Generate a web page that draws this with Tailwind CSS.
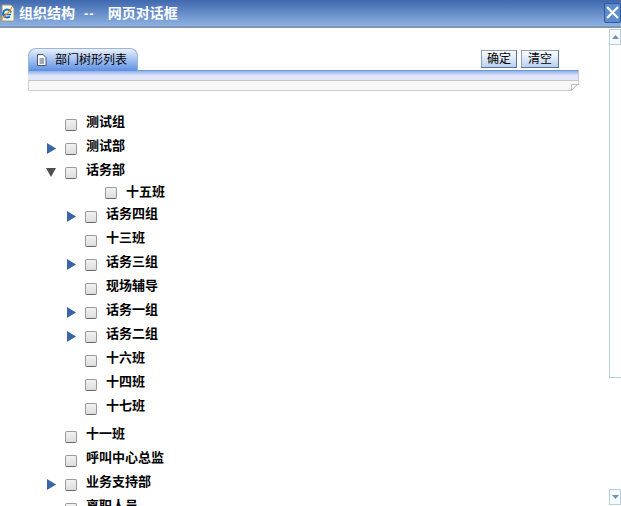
<!DOCTYPE html>
<html lang="zh-CN">
<head>
    <meta charset="UTF-8">
    <title>组织结构 -- 网页对话框</title>
    <script src="https://cdn.jsdelivr.net/npm/@tailwindcss/browser@4"></script>
</head>
<body class="w-[621px] h-[506px] overflow-hidden bg-white text-black font-['Liberation_Sans','Noto_Sans_CJK_SC',sans-serif]">
    <!-- Title bar -->
    <header class="h-[28px] flex items-center bg-gradient-to-b from-[#3f68ae] to-[#8fb2e2] border-b-2 border-b-[#7f97b5]">
        <svg class="w-[15px] h-[18px] shrink-0" viewBox="0 0 15 18">
            <path d="M2 1h9l3 3v13H2z" fill="#fbf8e8" stroke="#9a9a80"/>
            <path d="M2 10.500h9" stroke="#1c6fc4" stroke-width="1.600"/>
            <path d="M11 8.500a4 4 0 1 0-1.200 4" fill="none" stroke="#1c6fc4" stroke-width="2"/>
            <path d="M0 15C3 14 10 8 12 3" fill="none" stroke="#e09a20" stroke-width="1.300"/>
        </svg>
        <span class="ml-[4px] text-[14px] leading-none font-bold text-white whitespace-pre">组织结构</span>
        <span class="ml-[9px] text-[13px] leading-none font-bold text-white whitespace-pre tracking-[1px]">--</span>
        <span class="ml-[13px] text-[14px] leading-none font-bold text-white whitespace-pre">网页对话框</span>
        <button class="ml-auto w-[17px] h-[20px] mb-[1px] flex items-center justify-center rounded-[2px] border border-[#2f5a9e] bg-[#5d8bd0]" aria-label="关闭">
            <svg class="w-[13px] h-[13px]" viewBox="0 0 13 13"><path d="M1 1l11 11M12 1L1 12" stroke="#fff" stroke-width="2.200"/></svg>
        </button>
    </header>

    <div class="flex h-[478px]">
        <main class="flex-1 min-w-0 overflow-hidden pt-[20px] pl-[28px]">
            <!-- Tab strip -->
            <section class="w-[551px]">
                <div class="h-[22px] flex items-start">
                    <div class="w-[110px] h-[23px] flex items-center rounded-t-[8px] border border-b-0 border-[#9db4d6] bg-gradient-to-b from-[#e8f0fb] via-[#94b6ee] via-60% to-[#5a8fe0]">
                        <svg class="w-[11px] h-[12px] ml-[7px]" viewBox="0 0 11 12"><path d="M1.500 .5h5.500l3 3v8h-8.500z" fill="#fff" stroke="#44536e"/><path d="M3.500 5h4.500M3.500 7h4.500M3.500 9h4.500" stroke="#44536e"/></svg>
                        <span class="ml-[8px] text-[12px] leading-none">部门树形列表</span>
                    </div>
                    <div class="ml-auto mr-[20px] mt-[2px] flex gap-[4px]">
                        <button class="w-[36px] h-[18px] text-[12px] leading-none border border-[#8aa0bd] border-r-[#5b7391] border-b-[#5b7391] bg-gradient-to-b from-white to-[#b9d0f2]">确定</button>
                        <button class="w-[38px] h-[18px] text-[12px] leading-none border border-[#8aa0bd] border-r-[#5b7391] border-b-[#5b7391] bg-gradient-to-b from-white to-[#b9d0f2]">清空</button>
                    </div>
                </div>
                <div class="h-[10px] border-t border-[#6d97d6] border-r border-r-[#c8c8c8] bg-gradient-to-b from-[#8fb0e8] via-[#dfe5fb] to-[#e6e8fb]"></div>
                <div class="relative h-[11px] border border-t-[#c8c8c8] border-[#d0d0d0] bg-[#f8f8f8]">
                    <svg class="absolute right-[-1px] bottom-[-1px] w-[8px] h-[8px]" viewBox="0 0 8 8"><path d="M8 0v8H0z" fill="#fff"/><path d="M0 8V1.500h8" fill="#f8f8f8"/><path d="M.5 8V1.500H8M.5 7.500L7.500 .5" fill="none" stroke="#bdbdbd"/></svg>
                </div>
            </section>

            <!-- Department tree -->
            <ul id="tree" class="mt-[19px] text-[13px] font-bold leading-none">
                <li class="h-6 flex items-center -ml-[28px] pl-[65px]"><span class="w-[12px] h-[12px] mt-[6px] rounded-[2px] border border-[#9a9a9a] border-b-[#666] bg-gradient-to-b from-[#f2f2f2] to-[#dcdcdc]"></span><span class="ml-[9px] -mt-[2px]">测试组</span></li>
                <li class="h-6 flex items-center -ml-[28px] pl-[47px]"><svg class="w-[9px] h-[11px] mt-[5px]" viewBox="0 0 9 11"><path d="M0 0l9 5.500-9 5.500z" fill="#3a65a8"/></svg><span class="ml-[9px] w-[12px] h-[12px] mt-[6px] rounded-[2px] border border-[#9a9a9a] border-b-[#666] bg-gradient-to-b from-[#f2f2f2] to-[#dcdcdc]"></span><span class="ml-[9px] -mt-[2px]">测试部</span></li>
                <li class="h-6 flex items-center -ml-[28px] pl-[46px]"><svg class="w-[10px] h-[9px] mt-[5px]" viewBox="0 0 10 9"><path d="M0 0h10l-5 9z" fill="#505050"/></svg><span class="ml-[9px] w-[12px] h-[12px] mt-[6px] rounded-[2px] border border-[#9a9a9a] border-b-[#666] bg-gradient-to-b from-[#f2f2f2] to-[#dcdcdc]"></span><span class="ml-[9px] -mt-[2px]">话务部</span></li>
                <li class="h-[22px] flex items-center -ml-[28px] pl-[105px]"><span class="w-[12px] h-[12px] rounded-[2px] border border-[#9a9a9a] border-b-[#666] bg-gradient-to-b from-[#f2f2f2] to-[#dcdcdc]"></span><span class="ml-[9px] -mt-[4px]">十五班</span></li>
                <li class="h-[22px] flex items-center -ml-[28px] pl-[67px]"><svg class="w-[9px] h-[11px] mt-[3px]" viewBox="0 0 9 11"><path d="M0 0l9 5.500-9 5.500z" fill="#3a65a8"/></svg><span class="ml-[9px] w-[12px] h-[12px] mt-[4px] rounded-[2px] border border-[#9a9a9a] border-b-[#666] bg-gradient-to-b from-[#f2f2f2] to-[#dcdcdc]"></span><span class="ml-[9px] -mt-[4px]">话务四组</span></li>
                <li class="h-6 flex items-center -ml-[28px] pl-[85px]"><span class="w-[12px] h-[12px] mt-[6px] rounded-[2px] border border-[#9a9a9a] border-b-[#666] bg-gradient-to-b from-[#f2f2f2] to-[#dcdcdc]"></span><span class="ml-[9px] -mt-[2px]">十三班</span></li>
                <li class="h-6 flex items-center -ml-[28px] pl-[67px]"><svg class="w-[9px] h-[11px] mt-[5px]" viewBox="0 0 9 11"><path d="M0 0l9 5.500-9 5.500z" fill="#3a65a8"/></svg><span class="ml-[9px] w-[12px] h-[12px] mt-[6px] rounded-[2px] border border-[#9a9a9a] border-b-[#666] bg-gradient-to-b from-[#f2f2f2] to-[#dcdcdc]"></span><span class="ml-[9px] -mt-[2px]">话务三组</span></li>
                <li class="h-6 flex items-center -ml-[28px] pl-[85px]"><span class="w-[12px] h-[12px] mt-[6px] rounded-[2px] border border-[#9a9a9a] border-b-[#666] bg-gradient-to-b from-[#f2f2f2] to-[#dcdcdc]"></span><span class="ml-[9px] -mt-[2px]">现场辅导</span></li>
                <li class="h-6 flex items-center -ml-[28px] pl-[67px]"><svg class="w-[9px] h-[11px] mt-[5px]" viewBox="0 0 9 11"><path d="M0 0l9 5.500-9 5.500z" fill="#3a65a8"/></svg><span class="ml-[9px] w-[12px] h-[12px] mt-[6px] rounded-[2px] border border-[#9a9a9a] border-b-[#666] bg-gradient-to-b from-[#f2f2f2] to-[#dcdcdc]"></span><span class="ml-[9px] -mt-[2px]">话务一组</span></li>
                <li class="h-6 flex items-center -ml-[28px] pl-[67px]"><svg class="w-[9px] h-[11px] mt-[5px]" viewBox="0 0 9 11"><path d="M0 0l9 5.500-9 5.500z" fill="#3a65a8"/></svg><span class="ml-[9px] w-[12px] h-[12px] mt-[6px] rounded-[2px] border border-[#9a9a9a] border-b-[#666] bg-gradient-to-b from-[#f2f2f2] to-[#dcdcdc]"></span><span class="ml-[9px] -mt-[2px]">话务二组</span></li>
                <li class="h-6 flex items-center -ml-[28px] pl-[85px]"><span class="w-[12px] h-[12px] mt-[6px] rounded-[2px] border border-[#9a9a9a] border-b-[#666] bg-gradient-to-b from-[#f2f2f2] to-[#dcdcdc]"></span><span class="ml-[9px] -mt-[2px]">十六班</span></li>
                <li class="h-6 flex items-center -ml-[28px] pl-[85px]"><span class="w-[12px] h-[12px] mt-[6px] rounded-[2px] border border-[#9a9a9a] border-b-[#666] bg-gradient-to-b from-[#f2f2f2] to-[#dcdcdc]"></span><span class="ml-[9px] -mt-[2px]">十四班</span></li>
                <li class="h-6 flex items-center -ml-[28px] pl-[85px]"><span class="w-[12px] h-[12px] mt-[6px] rounded-[2px] border border-[#9a9a9a] border-b-[#666] bg-gradient-to-b from-[#f2f2f2] to-[#dcdcdc]"></span><span class="ml-[9px] -mt-[2px]">十七班</span></li>
                <li class="h-6 mt-[4px] flex items-center -ml-[28px] pl-[65px]"><span class="w-[12px] h-[12px] mt-[6px] rounded-[2px] border border-[#9a9a9a] border-b-[#666] bg-gradient-to-b from-[#f2f2f2] to-[#dcdcdc]"></span><span class="ml-[9px] -mt-[2px]">十一班</span></li>
                <li class="h-6 flex items-center -ml-[28px] pl-[65px]"><span class="w-[12px] h-[12px] mt-[6px] rounded-[2px] border border-[#9a9a9a] border-b-[#666] bg-gradient-to-b from-[#f2f2f2] to-[#dcdcdc]"></span><span class="ml-[9px] -mt-[2px]">呼叫中心总监</span></li>
                <li class="h-6 flex items-center -ml-[28px] pl-[47px]"><svg class="w-[9px] h-[11px] mt-[5px]" viewBox="0 0 9 11"><path d="M0 0l9 5.500-9 5.500z" fill="#3a65a8"/></svg><span class="ml-[9px] w-[12px] h-[12px] mt-[6px] rounded-[2px] border border-[#9a9a9a] border-b-[#666] bg-gradient-to-b from-[#f2f2f2] to-[#dcdcdc]"></span><span class="ml-[9px] -mt-[2px]">业务支持部</span></li>
                <li class="h-6 flex items-center -ml-[28px] pl-[65px]"><span class="w-[12px] h-[12px] mt-[6px] rounded-[2px] border border-[#9a9a9a] border-b-[#666] bg-gradient-to-b from-[#f2f2f2] to-[#dcdcdc]"></span><span class="ml-[9px] -mt-[2px]">离职人员</span></li>
            </ul>
        </main>

        <!-- Scrollbar -->
        <aside class="w-[12px] shrink-0 flex flex-col">
            <button class="h-[16px] mt-[1px] border border-[#b8d0dc] bg-[#f7fafc] flex items-center justify-center" aria-label="上">
                <svg class="w-[7px] h-[4px]" viewBox="0 0 7 4"><path d="M0 4l3.500-4 3.500 4z" fill="#6f93b8"/></svg>
            </button>
            <div class="h-[333px] border-l border-b border-[#b8d0dc] bg-white"></div>
            <div class="flex-1"></div>
            <button class="h-[16px] mb-[1px] border border-[#b8d0dc] bg-[#f7fafc] flex items-center justify-center" aria-label="下">
                <svg class="w-[7px] h-[4px]" viewBox="0 0 7 4"><path d="M0 0l3.500 4 3.500-4z" fill="#6f93b8"/></svg>
            </button>
        </aside>
    </div>
</body>
</html>
